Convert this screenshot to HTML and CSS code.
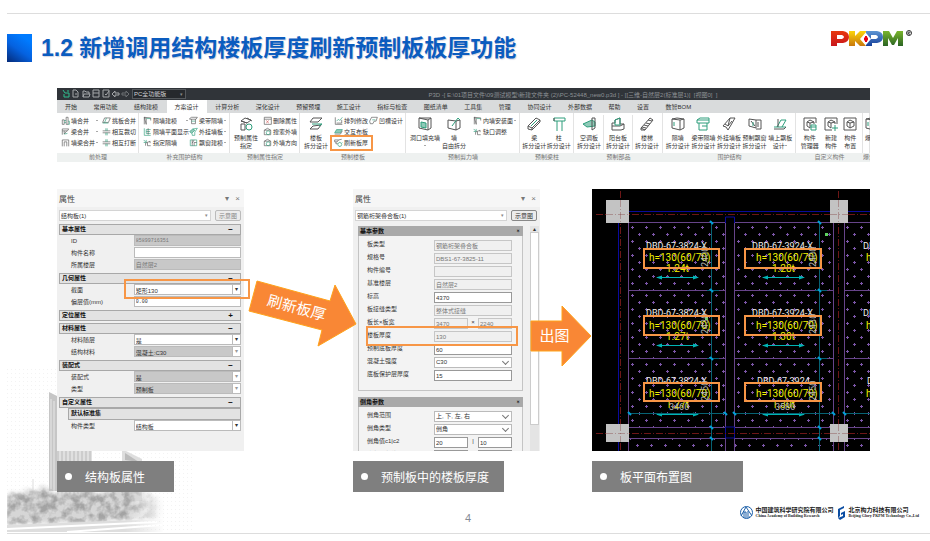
FILE: index.html
```html
<!DOCTYPE html>
<html lang="zh-CN">
<head>
  <meta charset="UTF-8">
  <meta name="viewport" content="width=device-width, initial-scale=1.0">
  <title>1.2 新增调用结构楼板厚度刷新预制板板厚功能</title>
  <link rel="stylesheet" href="styles.css">
</head>
<body>
  <!-- Icon set -->
  <svg class="icon-defs" aria-hidden="true">
    <symbol id="i-bars" viewBox="0 0 14 14"><path class="k" d="M2 13V6h3v7zM8 13V2h3v11z"/><path class="g" d="M5 10h3M5 7h3M11 8h2v5h-2"/></symbol>
    <symbol id="i-beam" viewBox="0 0 14 14"><path class="k" d="M2 3h10l-2 3H2zM2 6v6M5 6v5l4-5"/><path class="g" d="M5 11l5-1"/></symbol>
    <symbol id="i-gate" viewBox="0 0 14 14"><path class="k" d="M2 13V3h10v10M5 13V6h4v7"/></symbol>
    <symbol id="i-slab" viewBox="0 0 14 14"><path class="k" d="M4 3h9l-3 7H1z"/><path class="g" d="M7 3L4 10M1 11h9"/></symbol>
    <symbol id="i-cross" viewBox="0 0 14 14"><path class="k" d="M1 6h12M1 9h12"/><path class="g" d="M6 2v4M8 2v4M6 9v4M8 9v4"/></symbol>
    <symbol id="i-wall" viewBox="0 0 14 14"><path class="k" d="M2 13V2l10 1v4M2 2l3 2v9z"/><path class="g" d="M5 4h7"/></symbol>
    <symbol id="i-list" viewBox="0 0 14 14"><path class="g" d="M2 2v11h10M5 4h7M5 7h6M5 10h7M5 4v6"/><path class="k" d="M8 2v10"/></symbol>
    <symbol id="i-assign" viewBox="0 0 14 14"><path class="g" d="M1 3l4 4M5 3v4H1"/><path class="k" d="M4 12V8l7-3v3M7 7v5h5"/></symbol>
    <symbol id="i-part" viewBox="0 0 14 14"><path class="k" d="M1 4l3-2h9l-2 3H1zM4 5v7h6V5"/><path class="g" d="M4 8h6"/></symbol>
    <symbol id="i-hang" viewBox="0 0 14 14"><path class="gf" d="M1 7l5-4 3 2-5 5z"/><path class="g" d="M6 3l7-1-4 6v5H5v-3"/></symbol>
    <symbol id="i-bay" viewBox="0 0 14 14"><path class="g" d="M2 12V3h10v9z"/><path class="k" d="M5 3v9M8 3l-3 5M8 12V7h4"/></symbol>
    <symbol id="i-attr" viewBox="0 0 14 14"><path class="k" d="M2 4l4-3 6 2-4 3zM2 4l6 2M2 7h4v6H2zM8 1l5 3"/><circle class="g" cx="10" cy="10" r="3"/></symbol>
    <symbol id="i-del" viewBox="0 0 14 14"><path class="k" d="M2 13V2h11v11zM2 5h11"/><path class="r" d="M5 7l4 4M9 7l-4 4"/></symbol>
    <symbol id="i-find" viewBox="0 0 14 14"><path class="k" d="M2 5l5-3 5 3v7H2zM2 5h10"/><circle class="g" cx="8" cy="9" r="3"/></symbol>
    <symbol id="i-floor" viewBox="0 0 14 14"><path class="k" d="M4 1h9l-4 4H1zM4 9l8-1-3 4H1z"/><path class="g" d="M3 7h10l-3 2"/></symbol>
    <symbol id="i-edit" viewBox="0 0 14 14"><path class="k" d="M2 2v11h11M4 11h8V6"/><path class="g" d="M4 8l3-3 2 2 4-5"/></symbol>
    <symbol id="i-lay" viewBox="0 0 14 14"><path class="gf" d="M4 4h9l-3 5H1z"/><path class="k" d="M1 11h9l3-5"/></symbol>
    <symbol id="i-refresh" viewBox="0 0 14 14"><path class="k" d="M1 3h6L5 6H1zM7 3l5-1M3 6v3h3"/><circle class="g" cx="9" cy="10" r="3"/><path class="g" d="M9 6v1M9 13v1M12 8l1-1"/></symbol>
    <symbol id="i-notch" viewBox="0 0 14 14"><path class="k" d="M1 8l3-6h9l-2 6H8l-2 4H2z"/><path class="g" d="M5 6h5"/></symbol>
    <symbol id="i-hole" viewBox="0 0 14 14"><path class="k" d="M1 1l9 2 3-2v10l-3 2-9-2zM10 3v10M1 1h12"/><path class="gf" d="M3 5l5 1v5l-5-1z"/></symbol>
    <symbol id="i-free" viewBox="0 0 14 14"><path class="k" d="M1 3l8 1v9l-8-2zM9 4l4-1v8l-4 2"/><path class="g" d="M5 9l6-8 2 2"/></symbol>
    <symbol id="i-girder" viewBox="0 0 14 14"><path class="k" d="M1 9l8-8 4 2-8 8zM1 9v3l4 1v-2M5 13l8-8V3"/><path class="g" d="M4 9l6-6"/></symbol>
    <symbol id="i-column" viewBox="0 0 14 14"><path class="g" d="M2 1h11v3H2zM5 4v10M10 4v10"/><path class="k" d="M2 1v3"/></symbol>
    <symbol id="i-ac" viewBox="0 0 14 14"><path class="gf" d="M1 7l9-4 3 2v4L5 10z"/><path class="k" d="M10 1v12l3-2V1z"/></symbol>
    <symbol id="i-balcony" viewBox="0 0 14 14"><path class="k" d="M1 6h3V3l5-2v6h4v5l-3 1H1zM1 9h8l4-2"/><path class="g" d="M4 6V3l5-2v7H4z"/></symbol>
    <symbol id="i-stair" viewBox="0 0 14 14"><path class="k" d="M1 11l9-10 3 2-8 10zM2 10l4 1M4 8l4 1M6 6l4 1M8 3l4 1M1 11v2h4"/></symbol>
    <symbol id="i-box" viewBox="0 0 14 14"><path class="k" d="M1 2l8 1v10l-8-2zM9 3l4-1v9l-4 2M1 2l5-1 7 1"/><path class="g" d="M3 5v4"/></symbol>
    <symbol id="i-band" viewBox="0 0 14 14"><path class="g" d="M1 3h12v3H1zM3 6v7h8V6M1 3l3-2h9v2M6 9h5"/></symbol>
    <symbol id="i-panel" viewBox="0 0 14 14"><path class="k" d="M1 9l7-8h5l-4 7-3 5-2-3zM8 1l-2 8M3 7l3 2 4-5"/></symbol>
    <symbol id="i-window" viewBox="0 0 14 14"><path class="k" d="M1 2l7 1v8l-7-2zM8 3h5v9H8M3 4l4 5M10 5v5"/><path class="g" d="M5 5v4"/></symbol>
    <symbol id="i-plate" viewBox="0 0 14 14"><path class="g" d="M1 10h12M4 10l4-7h5l-4 7"/><path class="k" d="M1 12h10l2-2M5 2v8"/></symbol>
    <symbol id="i-manage" viewBox="0 0 14 14"><path class="k" d="M1 13V1h12v5M1 13h5M4 5l3-2 4 2v2M4 5v4l3 2M4 5l3 1 4-1M7 6v5"/><path class="g" d="M8 8h5v5H8zM8 10h5"/></symbol>
    <symbol id="i-new" viewBox="0 0 14 14"><path class="k" d="M1 13V1h12v6M1 13h7M4 5l3-2 4 2v2M4 5v4l3 2M4 5l3 1 4-1M7 6v5"/><path class="g" d="M11 8v6M8 11h6"/></symbol>
    <symbol id="i-place" viewBox="0 0 14 14"><path class="k" d="M1 1h12v12H1zM4 5l3-2 4 2v4l-4 2-3-2zM4 5l3 1 4-1M7 6v5"/></symbol>
  </svg>

  <!-- City backdrop -->
  <svg class="city" viewBox="0 0 188 164" aria-hidden="true">
    <defs>
      <pattern id="dots" width="4" height="4" patternUnits="userSpaceOnUse"><rect width="1" height="1" fill="#f3f3f3"/></pattern>
      <pattern id="floors" width="4" height="3" patternUnits="userSpaceOnUse"><rect width="4" height="3" fill="#cdcdcd"/><path d="M1 0v3" stroke="#f4f4f4"/></pattern>
      <linearGradient id="fade"><stop offset="0" stop-color="#fff"/><stop offset=".75" stop-color="#fff"/><stop offset="1" stop-color="#000"/></linearGradient>
      <mask id="fadeRight"><rect width="158" height="164" fill="url(#fade)"/></mask>
      <filter id="leaves" x="-5%" y="-20%" width="110%" height="140%" color-interpolation-filters="sRGB">
        <feTurbulence type="fractalNoise" baseFrequency=".12" numOctaves="3" seed="4" result="n"/>
        <feColorMatrix in="n" type="matrix" values="0 0 0 0 .64  0 0 0 0 .64  0 0 0 0 .64  3 0 0 0 -1.1" result="t"/>
        <feGaussianBlur in="SourceGraphic" stdDeviation="2" result="s"/>
        <feComposite in="t" in2="s" operator="in" result="tex"/>
        <feMerge><feMergeNode in="s"/><feMergeNode in="tex"/></feMerge>
      </filter>
    </defs>
    <rect width="188" height="164" fill="url(#dots)"/>
    <path d="M42 23l8 4v95h-8z" fill="#c6c6c6"/>
    <path d="M44 30v90M47 32v90" stroke="#e8e8e8"/>
    <path d="M50 80h35v55H50z" fill="url(#floors)"/>
    <path d="M115 80l20 10v42h-20z" fill="#dedede"/>
    <path d="M118 84l14 9-14-2z" fill="#bcbcbc"/>
    <path d="M26 110v24M24 122h4v12h-4z" stroke="#ddd" fill="#e4e4e4"/>
    <g mask="url(#fadeRight)">
      <path d="M0 128l6-5 8 3 6-6 8 4 8-7 10 8 14-2 8 3 12-5 14 5 16-8 10 4 14-3 8 6 16 6v18l-80 4L0 155z" fill="#d6d6d6" filter="url(#leaves)"/>
      <path d="M0 156l156-6v13H0z" fill="#dedede"/>
      <path d="M0 160l150-7M60 163l95-7" stroke="#fff" stroke-width="2"/>
    </g>
  </svg>

  <header class="slide-header">
    <span class="title-mark"></span>
    <h1>1.2 新增调用结构楼板厚度刷新预制板板厚功能</h1>
    <svg class="pkpm" viewBox="0 0 82 18" role="img" aria-label="PKPM">
      <defs>
        <linearGradient id="lr" x2="0" y2="1"><stop stop-color="#e8380d"/><stop offset="1" stop-color="#c8161d"/></linearGradient>
        <linearGradient id="ly" x2="0" y2="1"><stop stop-color="#fbd40b"/><stop offset="1" stop-color="#c9780c"/></linearGradient>
        <linearGradient id="lb" x2="0" y2="1"><stop stop-color="#5d95d3"/><stop offset="1" stop-color="#153f9a"/></linearGradient>
        <linearGradient id="lg" x2="0" y2="1"><stop stop-color="#7ab52c"/><stop offset="1" stop-color="#2b6424"/></linearGradient>
      </defs>
      <path fill="url(#lr)" fill-rule="evenodd" d="M0 1h12q6 1 6 6t-6 6H6v3H0zM6 5v4h5q2-1 2-2t-2-2z"/>
      <path fill="url(#ly)" d="M18 1h6v5l5-5h7l-7 8 6 7h-6l-5-5v5h-6z"/>
      <path fill="url(#lb)" fill-rule="evenodd" d="M35 1h11q6 1 6 6t-6 6h-5v3h-6zM40 5v4h5q2-1 2-2t-2-2z"/>
      <path fill="#fff" d="M35 3l5 6-5 6-5-6z"/>
      <path fill="#e60012" d="M34 6h2v1l1 1v2l-1 1v1h-2v-1l-1-1V8l1-1z"/>
      <path fill="url(#lg)" d="M52 1h6l4 7 4-7h6v15h-5V8l-4 7h-2l-4-7v8h-5z"/>
      <circle cx="78" cy="3" r="2.500" fill="none" stroke="#333"/>
      <path d="M77 5V2h2v1h-2l2 2" fill="none" stroke="#333" stroke-width=".7"/>
    </svg>
  </header>

  <main>
    <!-- Application ribbon -->
    <section class="ribbon">
      <div class="title-bar">
        <svg class="quick" viewBox="0 0 68 10" aria-hidden="true">
          <path class="green" d="M1 1l2 3M3 4h4v4H2V5M6 1v2"/>
          <path d="M11 1h3l2 2v5h-5zM13 5h2M21 8V2h2l1 1h3v2M21 8l1-3h6l-1 3zM31 1h6v7h-6zM31 4h6M41 1h6v7h-6zM43 5l1 1 3-4M50 5l3-3v2h4v2h-4v2z"/>
          <path class="dim-icon" d="M67 5l-3-3v2h-4v2h4v2z"/>
        </svg>
        <span class="pick dark"><select aria-label="工作空间"><option>PC全功能版</option></select></span>
        <span class="doc-title">P3D -[ E:\01项目文件\09测试模型\新建文件夹 (2)\PC-52448_new0.p3d ] - [[三维-自然层2(标准层1)]&nbsp; [视图0]&nbsp; ]</span>
      </div>
      <nav class="tabs">
        <button>开始</button><button>常用功能</button><button>结构建模</button><button class="active">方案设计</button><button>计算分析</button><button>深化设计</button><button>预留预埋</button><button>施工设计</button><button>指标与检查</button><button>图纸清单</button><button>工具集</button><button>管理</button><button>协同设计</button><button>外部数据</button><button>帮助</button><button>设置</button><button>数智BOM</button>
      </nav>
      <div class="groups">
        <div class="group">
          <div class="tools">
            <div class="stack">
              <button><svg><use href="#i-bars"/></svg>墙合并<i class="more"></i></button>
              <button><svg><use href="#i-beam"/></svg>梁合并<i class="more"></i></button>
              <button><svg><use href="#i-gate"/></svg>墙梁合并<i class="more"></i></button>
            </div>
            <div class="stack">
              <button><svg><use href="#i-slab"/></svg>挑板合并</button>
              <button><svg><use href="#i-cross"/></svg>相互裁切</button>
              <button><svg><use href="#i-cross"/></svg>相互打断</button>
            </div>
          </div>
          <div class="group-name">前处理</div>
        </div>
        <div class="group">
          <div class="tools">
            <div class="stack">
              <button><svg><use href="#i-wall"/></svg>隔墙建模<i class="more"></i></button>
              <button><svg><use href="#i-list"/></svg>隔墙平面显示</button>
              <button><svg><use href="#i-assign"/></svg>指定隔墙</button>
            </div>
            <div class="stack">
              <button><svg><use href="#i-part"/></svg>梁带隔墙<i class="more"></i></button>
              <button><svg><use href="#i-hang"/></svg>外挂墙板<i class="more"></i></button>
              <button><svg><use href="#i-bay"/></svg>飘窗建模<i class="more"></i></button>
            </div>
          </div>
          <div class="group-name">补充围护结构</div>
        </div>
        <div class="group">
          <div class="tools">
            <button class="big"><svg><use href="#i-attr"/></svg>预制属性<br>指定</button>
            <div class="stack">
              <button><svg><use href="#i-del"/></svg>删除属性</button>
              <button><svg><use href="#i-find"/></svg>搜索外墙</button>
              <button><svg><use href="#i-find"/></svg>外墙方向</button>
            </div>
          </div>
          <div class="group-name">预制属性指定</div>
        </div>
        <div class="group">
          <div class="tools">
            <button class="big"><svg><use href="#i-floor"/></svg>楼板<br>拆分设计</button>
            <div class="stack">
              <button><svg><use href="#i-edit"/></svg>排列修改</button>
              <button><svg><use href="#i-lay"/></svg>交互布板</button>
              <button class="marked"><svg><use href="#i-refresh"/></svg>刷新板厚</button>
            </div>
            <div class="stack">
              <button><svg><use href="#i-notch"/></svg>凹槽设计</button>
            </div>
          </div>
          <div class="group-name">预制楼板</div>
        </div>
        <div class="group">
          <div class="tools">
            <button class="big"><svg><use href="#i-hole"/></svg>洞口填充墙<br><i class="more"></i></button>
            <button class="big"><svg><use href="#i-free"/></svg>墙<br>自由拆分</button>
            <div class="stack">
              <button><svg><use href="#i-wall"/></svg>内墙安装面<i class="more"></i></button>
              <button><svg><use href="#i-assign"/></svg>缺口调整</button>
            </div>
          </div>
          <div class="group-name">预制剪力墙</div>
        </div>
        <div class="group">
          <div class="tools">
            <button class="big"><svg><use href="#i-girder"/></svg>梁<br>拆分设计</button>
            <button class="big"><svg><use href="#i-column"/></svg>柱<br>拆分设计</button>
          </div>
          <div class="group-name">预制梁柱</div>
        </div>
        <div class="group">
          <div class="tools split">
            <button class="big"><svg><use href="#i-ac"/></svg>空调板<br>拆分设计</button>
            <button class="big"><svg><use href="#i-balcony"/></svg>阳台板<br>拆分设计</button>
            <button class="big"><svg><use href="#i-stair"/></svg>楼梯<br>拆分设计</button>
          </div>
          <div class="group-name">预制部品</div>
        </div>
        <div class="group">
          <div class="tools">
            <button class="big"><svg><use href="#i-box"/></svg>隔墙<br>拆分设计</button>
            <button class="big"><svg><use href="#i-band"/></svg>梁带隔墙<br>拆分设计</button>
            <button class="big"><svg><use href="#i-panel"/></svg>外挂墙板<br>拆分设计</button>
            <button class="big"><svg><use href="#i-window"/></svg>预制飘窗<br>拆分设计</button>
            <button class="big"><svg><use href="#i-plate"/></svg>墙上飘板<br>设计<i class="more"></i></button>
          </div>
          <div class="group-name">围护结构</div>
        </div>
        <div class="group">
          <div class="tools">
            <button class="big"><svg><use href="#i-manage"/></svg>构件<br>管理器</button>
            <button class="big"><svg><use href="#i-new"/></svg>新建<br>构件</button>
            <button class="big"><svg><use href="#i-place"/></svg>构件<br>布置</button>
          </div>
          <div class="group-name">自定义构件</div>
        </div>
        <div class="group cut">
          <div class="tools"><button class="big"><svg><use href="#i-box"/></svg>爆炸</button></div>
          <div class="group-name">爆炸</div>
        </div>
      </div>
    </section>

    <div class="columns panels">
      <!-- Structural slab properties -->
      <section class="panel">
        <div class="panel-head"><h2>属性</h2><span>▾</span><span>×</span></div>
        <div class="object-row">
          <span class="pick plain"><select aria-label="当前构件"><option>结构板(1)</option></select></span>
          <button class="sketch" disabled>示意图</button>
        </div>
        <div class="grid-list">
          <h3>基本属性<b>−</b></h3>
          <div class="prop"><label for="p-id">ID</label><input class="num" id="p-id" value="85899716351" disabled></div>
          <div class="prop"><label for="p-name">构件名称</label><input id="p-name"></div>
          <div class="prop"><label for="p-floor">所属楼层</label><input id="p-floor" value="自然层2" disabled></div>
          <h3>几何属性<b>−</b></h3>
          <div class="prop marked"><label for="p-sec">截面</label><span class="pick"><select id="p-sec"><option>矩形130</option></select></span></div>
          <div class="prop"><label for="p-off">偏层值(mm)</label><input class="num" id="p-off" value="0.00"></div>
          <h3>定位属性<b>+</b></h3>
          <h3>材料属性<b>−</b></h3>
          <div class="prop"><label for="p-mat">材料随层</label><span class="pick"><select id="p-mat"><option>是</option></select></span></div>
          <div class="prop"><label for="p-con">结构材料</label><span class="pick off"><select id="p-con" disabled><option>混凝土:C30</option></select></span></div>
          <h3>装配式<b>−</b></h3>
          <div class="prop"><label for="p-pre">装配式</label><span class="pick off"><select id="p-pre" disabled><option>是</option></select></span></div>
          <div class="prop"><label for="p-type">类型</label><span class="pick off"><select id="p-type" disabled><option>预制板</option></select></span></div>
          <h3>自定义属性<b>−</b></h3>
          <h4>默认标准集</h4>
          <div class="prop"><label for="p-kind">构件类型</label><span class="pick"><select id="p-kind"><option>结构板</option></select></span></div>
        </div>
      </section>

      <div class="arrow arrow-refresh">
        <svg viewBox="0 0 109 68" aria-hidden="true"><path d="M9 1l73 20 5-16 21 39-38 22 4-16L1 31z"/></svg>
        <span>刷新板厚</span>
      </div>

      <!-- Precast slab parameters -->
      <section class="panel">
        <div class="panel-head"><h2>属性</h2><span>▾</span><span>×</span></div>
        <div class="object-row">
          <span class="pick plain"><select aria-label="当前预制构件"><option>钢筋桁架叠合板(1)</option></select></span>
          <button class="sketch">示意图</button>
        </div>
        <div class="scroll-area">
          <div class="cards">
            <div class="card">
              <h3>基本参数<b>»</b></h3>
              <div class="field"><label for="f-type">板类型</label><input id="f-type" value="钢筋桁架叠合板" disabled></div>
              <div class="field"><label for="f-spec">规格号</label><input id="f-spec" value="DBS1-67-3825-11" disabled></div>
              <div class="field"><label for="f-no">构件编号</label><input id="f-no" disabled></div>
              <div class="field"><label for="f-base">基准楼层</label><input id="f-base" value="自然层2" disabled></div>
              <div class="field"><label for="f-lev">标高</label><input id="f-lev" value="4370"></div>
              <div class="field"><label for="f-joint">板接缝类型</label><input id="f-joint" value="整体式接缝" disabled></div>
              <div class="field"><label for="f-len">板长×板宽</label><span class="pair"><input id="f-len" value="3470" disabled><i>×</i><input aria-label="板宽" value="2240" disabled></span></div>
              <div class="field marked"><label for="f-thick">楼板厚度</label><input id="f-thick" value="130" disabled></div>
              <div class="field"><label for="f-bot">预制底板厚度</label><input id="f-bot" value="60"></div>
              <div class="field"><label for="f-grade">混凝土强度</label><span class="pick thin"><select id="f-grade"><option>C30</option></select></span></div>
              <div class="field"><label for="f-cover">底板保护层厚度</label><input id="f-cover" value="15"></div>
            </div>
            <div class="card">
              <h3>倒角参数<b>»</b></h3>
              <div class="field"><label for="f-range">倒角范围</label><span class="pick thin"><select id="f-range"><option>上, 下, 左, 右</option></select></span></div>
              <div class="field"><label for="f-cham">倒角类型</label><span class="pick thin"><select id="f-cham"><option>倒角</option></select></span></div>
              <div class="field"><label for="f-c1">倒角值c1|c2</label><span class="pair"><input id="f-c1" value="20"><i>|</i><input aria-label="c2" value="10"></span></div>
              <div class="field"><label for="f-d1">底角倒角值c1|c2</label><span class="pair"><input id="f-d1"><i>|</i><input aria-label="底角c2"></span></div>
            </div>
          </div>
          <div class="scrollbar"><span>▴</span><div class="thumb"></div></div>
        </div>
      </section>

      <div class="arrow arrow-draw">
        <svg viewBox="0 0 62 62" aria-hidden="true"><path d="M1 16h31V1l29 30-29 30V46H1z"/></svg>
        <span>出图</span>
      </div>

      <!-- Slab layout drawing -->
      <svg class="cad" viewBox="0 0 278 262" preserveAspectRatio="xMinYMin slice" role="img" aria-label="板平面布置图">
        <defs>
          <pattern id="plus" x="1" y="2" width="14" height="14" patternUnits="userSpaceOnUse">
            <path d="M1 2.500h3M2.500 1v3M8 9.500h3M9.500 8v3" stroke="#7c56a8" fill="none"/>
          </pattern>
          <g id="bay">
            <rect width="97" height="68" fill="url(#plus)"/>
            <path d="M28 54.500h41" stroke="#00b4b4"/>
            <path d="M27 54.500l6-2v4zM70 54.500l-6-2v4z" fill="#00b4b4"/>
          </g>
        </defs>
        <rect width="278" height="262" fill="#000"/>
        <use href="#bay" x="37" y="34"/><use href="#bay" x="143" y="34"/><use href="#bay" x="252" y="34"/>
        <use href="#bay" x="37" y="102"/><use href="#bay" x="143" y="102"/><use href="#bay" x="252" y="102"/>
        <use href="#bay" x="37" y="171"/><use href="#bay" x="143" y="171"/><use href="#bay" x="252" y="171"/>
        <g fill="url(#plus)"><rect x="37" y="250" width="97" height="12"/><rect x="143" y="250" width="99" height="12"/><rect x="252" y="250" width="26" height="12"/></g>
        <path class="edge" d="M36.500 34v228M133.500 34v228M142.500 34v228M241.500 34v201M241.500 253v9M252.500 34v228M37 33.500h97M142 33.500h100M252 33.500h26M37 101.500h97M142 101.500h100M252 101.500h26M37 169.500h97M142 169.500h100M252 169.500h26M37 238.500h97M142 238.500h100M252 238.500h26M37 249.500h97M142 249.500h100M252 249.500h26"/>
        <path class="blue" d="M37 22.500h201M256 22.500h22M26.500 34v201M26.500 253v9M133.500 34v-6h9v6M133.500 238v11h9v-11z"/>
        <path class="axis" d="M4 25.500h274M4 244.500h274M28.500 2v260M246.500 2v260"/>
        <path class="dim" d="M119.500 34v228M227.500 34v228M36 224.500h97M142 224.500h100M252 224.500h26M115 101.500h12M223 101.500h12M115 169.500h12M223 169.500h12"/>
        <path class="tick" d="M118 32l3 3M226 32l3 3M118 100l3 3M226 100l3 3M118 168l3 3M226 168l3 3M118 237l3 3M226 237l3 3M36 223l3 3M132 223l3 3M141 223l3 3M240 223l3 3M251 223l3 3M118 248l3 3M226 248l3 3"/>
        <g fill="#c3c3c3"><rect x="14" y="11" width="23" height="23"/><rect x="238" y="11" width="18" height="23"/><rect x="14" y="235" width="23" height="18"/><rect x="238" y="235" width="18" height="18"/></g>
        <path d="M233 44h3v3h-3zM113 128h3v3h-3z" fill="#5fd35f"/>
        <path class="axis" d="M14 25.500h23M28.500 11v23M238 25.500h18M246.500 11v23M14 244.500h23M28.500 235v18M238 244.500h18M246.500 235v18" opacity=".3"/>
        <g class="code">
          <text x="54" y="60">DBD-67-3824-X</text><text x="160" y="60">DBD-67-3924-X</text><text x="271" y="60">DBD-67</text>
          <text x="54" y="127">DBD-67-3824-X</text><text x="160" y="127">DBD-67-3924-X</text><text x="271" y="127">DBD-67</text>
          <text x="54" y="195">DBD-67-3824-X</text><text x="165" y="195">DBD-67-3924</text><text x="275" y="195">DBD</text>
        </g>
        <g class="thick">
          <text x="57" y="72">h=130(60/70)</text><text x="164" y="72">h=130(60/70)</text><text x="274" y="72">h=130</text>
          <text x="57" y="140">h=130(60/70)</text><text x="164" y="140">h=130(60/70)</text><text x="274" y="140">h=130</text>
          <text x="57" y="208">h=130(60/70)</text><text x="164" y="208">h=130(60/70)</text><text x="274" y="208">h=130</text>
          <text x="74" y="83">1.24t</text><text x="180" y="83">1.28t</text>
          <text x="74" y="151">1.27t</text><text x="180" y="151">1.30t</text>
          <text x="74" y="219">1.27t</text><text x="180" y="219">1.30t</text>
        </g>
        <g class="size">
          <text x="77" y="221">3460</text><text x="183" y="221">3580</text>
          <text transform="translate(116 78) rotate(-90)">2400</text><text transform="translate(224 78) rotate(-90)">2400</text>
          <text transform="translate(116 145) rotate(-90)">2430</text><text transform="translate(224 145) rotate(-90)">2430</text>
          <text transform="translate(116 212) rotate(-90)">2450</text><text transform="translate(224 212) rotate(-90)">2450</text>
        </g>
        <g class="frame">
          <rect x="52" y="60" width="75" height="19"/><rect x="153" y="60" width="76" height="19"/>
          <rect x="52" y="127" width="75" height="19"/><rect x="153" y="127" width="76" height="19"/>
          <rect x="52" y="194" width="75" height="18"/><rect x="153" y="194" width="76" height="18"/>
        </g>
      </svg>
    </div>

    <div class="columns captions">
      <p class="short">结构板属性</p>
      <p>预制板中的楼板厚度</p>
      <p>板平面布置图</p>
    </div>
  </main>

  <footer>
    <span class="page-no">4</span>
    <div class="brands">
      <svg width="13" height="13" viewBox="0 0 13 13" aria-hidden="true"><circle cx="6.500" cy="6.500" r="6" fill="#fff" stroke="#1b5fa8"/><path d="M1 10l5-9 6 9M4 10V6h2v4M8 10V5M3 11h7" fill="none" stroke="#1b5fa8"/></svg>
      <p>中国建筑科学研究院有限公司<small>China Academy of Building Research</small></p>
      <svg width="9" height="14" viewBox="0 0 9 14" aria-hidden="true"><path d="M1 3l6-3v2L3 4v6l-2 2zM4 7l4-2v6l-5 3-2-2 5-2V8L4 9z" fill="#0b4da2"/></svg>
      <p>北京构力科技有限公司<small>Beijing Glory PKPM Technology Co.,Ltd</small></p>
    </div>
  </footer>
</body>
</html>
```
FILE: styles.css
```css
:root {
  --orange: #f79646;
  --arrow: #f98735;
  --blue: #0b5cbf;
  --green: #2f9e7c;
  --ink: #333;
  --panel: #f0f0f0;
}

* {
  box-sizing: border-box;
}

body {
  margin: 0;
  padding: 13px 0 0 7px;
  position: relative;
  background: #fff;
  color: var(--ink);
  font-family: "Liberation Sans", "Noto Sans CJK SC", sans-serif;
  font-size: 6px;
}

h1, h2, h3, h4, p {
  margin: 0;
  font-weight: normal;
}

button, input, select {
  font: inherit;
  color: inherit;
  margin: 0;
  padding: 0;
  border: 0;
  border-radius: 0;
  background: none;
}

select {
  appearance: none;
  width: 100%;
  height: 100%;
}

select:disabled, input:disabled {
  opacity: 1;
}

i {
  font-style: normal;
}

.icon-defs {
  position: absolute;
  width: 0;
  height: 0;
}

.k, .g, .r {
  fill: none;
  stroke: #555;
}

.g { stroke: var(--green); }
.r { stroke: #d05050; }
.gf { fill: #8fcab8; stroke: var(--green); }

.city {
  position: absolute;
  left: 7px;
  bottom: 8px;
  width: 188px;
  z-index: -1;
}

/* Header */
.slide-header {
  display: flex;
  align-items: center;
  border-top: 1px solid #ddd;
  padding: 20px 17px 0 0;
}

.title-mark {
  width: 25px;
  height: 28px;
  margin-right: 9px;
  background: linear-gradient(35deg, #052a78, #0562e0 45%, #007bff 80%);
}

.slide-header h1 {
  font-size: 23px;
  line-height: 28px;
  font-weight: bold;
  color: var(--blue);
  text-shadow: 1px 1px 1px #d4d4e0;
}

.pkpm {
  align-self: flex-start;
  width: 82px;
  height: 18px;
  margin: -4px 0 0 auto;
}

main {
  margin: 26px 60px 0 50px;
}

/* Ribbon */
.title-bar {
  display: flex;
  align-items: center;
  height: 12px;
  padding-left: 5px;
  background: #303439;
  color: #8d9195;
}

.quick {
  width: 68px;
  height: 10px;
  fill: none;
  stroke: #a4a7aa;
}

.quick .green {
  stroke: #2fbf8f;
}

.quick .dim-icon {
  stroke: #6c7074;
}

.doc-title {
  margin-left: 30%;
  white-space: nowrap;
}

.tabs {
  display: flex;
  justify-content: space-between;
  height: 13px;
  padding-right: 21%;
  background: #d9dbdc;
}

.tabs button {
  padding: 0 8px;
  white-space: nowrap;
}

.tabs .active {
  background: #fff;
}

.groups {
  display: grid;
  grid-template-columns: 82fr 91fr 70fr 106fr 114fr 54fr 89fr 133fr 67fr 7fr;
  background: #fff;
}

.group {
  min-width: 0;
}

.tools {
  display: flex;
  justify-content: space-between;
  height: 40px;
  padding: 2px 2px 0 4px;
  border-right: 1px solid #e3e3e3;
}

.group-name {
  height: 9px;
  line-height: 9px;
  text-align: center;
  background: #eef1f0;
  color: #777;
  white-space: nowrap;
}

.stack button {
  display: flex;
  align-items: center;
  gap: 1px;
  width: 100%;
  height: 11px;
  white-space: nowrap;
}

.stack svg {
  width: 9px;
  height: 9px;
  flex: none;
}

.big + .stack {
  margin-left: 5px;
}

.big {
  display: block;
  align-self: flex-start;
  min-width: 0;
  padding-top: 2px;
  line-height: 8px;
  text-align: center;
  white-space: nowrap;
}

.big svg {
  display: block;
  width: 14px;
  height: 14px;
  margin: 0 auto 3px;
}

.more {
  display: inline-block;
  margin: 0 1px 1px auto;
  border: 1px solid transparent;
  border-top-color: #555;
  border-bottom: 0;
  vertical-align: middle;
}

.group:nth-child(n+6) .tools {
  padding: 2px 2px 0;
  justify-content: space-around;
}

.split .big + .big {
  border-left: 1px solid #e3e3e3;
  padding-left: 2px;
}

.cut {
  overflow: hidden;
}

.stack .marked, .prop.marked, .field.marked {
  position: relative;
}

.marked::after {
  content: '';
  position: absolute;
  border: 2px solid var(--orange);
  pointer-events: none;
  z-index: 2;
}

.stack .marked::after {
  inset: -2px -5px -3px -4px;
}

/* Columns */
.columns {
  display: grid;
  grid-template-columns: 187fr 109fr 187fr 52fr 278fr;
}

.panels {
  height: 262px;
  margin-top: 27px;
}

.panel {
  min-width: 0;
  height: 262px;
  padding: 0 3px 0 2px;
  background: var(--panel);
}

.panel-head {
  display: flex;
  align-items: center;
  gap: 6px;
  height: 18px;
  margin: 0 -3px 0 -2px;
  padding: 0 4px 0 2px;
  background: #f6f6f6;
  color: #777;
  font-size: 8px;
}

.panel-head h2 {
  margin-right: auto;
  font-size: 8px;
  color: #444;
}

.object-row {
  display: flex;
  gap: 4px;
  height: 11px;
  margin: 3px 0;
}

.sketch {
  width: 26px;
  border: 1px solid #888;
  border-radius: 2px;
  background: #ececec;
  white-space: nowrap;
}

.sketch:disabled {
  border-color: #bbb;
  color: #888;
}

.pick {
  position: relative;
  display: block;
  flex: 1;
  min-width: 0;
  border: 1px solid #bbb;
  background: #fff;
}

.pick select {
  display: block;
  padding-left: 1px;
}

.pick::after {
  content: '▾';
  position: absolute;
  inset: 0 0 0 auto;
  width: 7px;
  border-left: 1px solid #bbb;
  background: #fff;
  text-align: center;
  line-height: 9px;
  pointer-events: none;
}

.pick.plain::after, .pick.dark::after {
  border: 0;
  background: none;
  color: #888;
  font-size: 5px;
}

.pick.plain {
  border-color: #d4d4d4;
}

.pick.dark {
  flex: 0 0 54px;
  height: 10px;
  margin-left: 2px;
  border-color: #55595d;
  background: #26292d;
  color: #d0d2d4;
}

.pick.off {
  background: #c8c8c8;
}

.pick.off::after {
  color: #999;
}

.pick.thin::after {
  content: '';
  width: 4px;
  height: 4px;
  inset: 1px 3px auto auto;
  border: solid #777;
  border-width: 0 1px 1px 0;
  background: none;
  transform: rotate(45deg);
}

.num {
  font-family: "Liberation Mono", monospace;
  font-size: 5px;
}

/* Property list */
.grid-list h3, .grid-list h4 {
  display: flex;
  justify-content: space-between;
  height: 11px;
  margin-top: 2px;
  padding: 0 7px 0 2px;
  border: 1px solid #a8a8a8;
  background: #e2e2e2;
  color: #111;
  font-size: 6px;
  line-height: 9px;
  font-weight: bold;
}

.grid-list h3:first-child {
  margin-top: 0;
}

.grid-list b {
  font-size: 8px;
}

.grid-list h4 {
  height: 12px;
  margin: 0 0 0 9px;
}

.prop {
  display: grid;
  grid-template-columns: 38% 1fr;
  height: 12px;
  padding-left: 9px;
  line-height: 12px;
}

.prop label {
  padding-left: 3px;
  white-space: nowrap;
}

.prop input {
  min-width: 0;
  width: 100%;
  height: 11px;
  padding-left: 1px;
  border: 1px solid #bbb;
  background: #fff;
}

.prop input:disabled {
  background: #c8c8c8;
  color: #777;
}

.prop .pick {
  height: 11px;
}

.prop.marked::after {
  inset: -5px -9px -3px 65px;
}

/* Parameter cards */
.scroll-area {
  display: flex;
  justify-content: space-between;
  height: 227px;
  padding: 2px 0 0 3px;
  margin-right: -2px;
  overflow: hidden;
}

.cards {
  flex: 1;
  margin-right: 7px;
}

.card {
  height: 165px;
  margin-bottom: 6px;
  border: 1px solid #c4c4c4;
  background: #f3f3f3;
}

.card h3 {
  display: flex;
  justify-content: space-between;
  height: 10px;
  margin: -1px -1px 3px;
  padding: 0 3px 0 2px;
  background: #a9a9a9;
  color: #111;
  font-size: 6px;
  line-height: 10px;
  font-weight: bold;
}

.card h3 b {
  transform: rotate(90deg);
}

.field {
  display: grid;
  grid-template-columns: 67px 1fr;
  height: 13px;
  padding: 1px 10px 0 8px;
  line-height: 9px;
}

.field label {
  white-space: nowrap;
}

.field input {
  min-width: 0;
  width: 100%;
  height: 11px;
  padding-left: 1px;
  border: 1px solid #999;
  background: #fff;
}

.field input:disabled {
  border-color: #c6c6c6;
  background: var(--panel);
  color: #777;
}

.field .pick {
  height: 11px;
}

.pair {
  display: grid;
  grid-template-columns: 1fr 10px 1fr;
  text-align: center;
}

.field.marked::after {
  inset: -4px 4px -3px 7px;
}

.scrollbar {
  width: 9px;
  background: #e4e4e4;
  text-align: center;
  line-height: 6px;
}

.thumb {
  height: 193px;
  border: 1px solid #ccc;
  background: #fff;
}

/* Arrows */
.arrow {
  position: relative;
  z-index: 3;
  display: grid;
  place-items: center;
  align-self: start;
  color: #fff;
}

.arrow > * {
  grid-area: 1 / 1;
}

.arrow svg {
  width: 109px;
  fill: var(--arrow);
  stroke: #ffa31a;
}

.arrow-refresh {
  margin: 91px -4px 0 4px;
}

.arrow-refresh span {
  margin: 0 10px 16px 0;
  font-size: 15px;
  transform: rotate(15deg);
}

.arrow-draw {
  margin: 116px 0 0 -10px;
}

.arrow-draw svg {
  width: 62px;
}

.arrow-draw span {
  margin: 0 13px 3px 0;
  font-size: 15px;
}

/* Drawing */
.cad {
  display: block;
  width: 100%;
  height: 262px;
}

.edge, .blue, .axis, .dim, .tick, .frame {
  fill: none;
}

.edge { stroke: #67448a; }
.blue { stroke: #0a0a9c; }
.axis { stroke: #6d1616; stroke-dasharray: 7 2 1 2; }
.dim { stroke: #076273; }
.tick { stroke: #00a0d8; stroke-width: 2; }
.frame { stroke: var(--orange); stroke-width: 2; }

.code, .thick, .size {
  font-family: Roboto, "Liberation Sans", sans-serif;
  font-size: 9px;
  fill: #eee;
}

.thick { font-size: 10px; fill: #f2f200; }
.size { fill: #b8b8b8; }

/* Captions */
.captions {
  margin-top: 10px;
}

.captions p {
  display: flex;
  align-items: center;
  grid-column: 3;
  width: 151px;
  height: 31px;
  padding-left: 8px;
  background: #7f7f7f;
  color: #fff;
  font-size: 12px;
  white-space: nowrap;
}

.captions p::before {
  content: '';
  width: 7px;
  height: 7px;
  margin-right: 13px;
  border-radius: 50%;
  background: #fff;
}

.captions .short {
  grid-column: 1;
  width: 117px;
}

.captions p:last-child {
  grid-column: 5;
}

/* Footer */
footer {
  display: flex;
  justify-content: space-between;
  align-items: center;
  height: 42px;
  margin-bottom: 7px;
  padding: 0 11px 0 458px;
  border-bottom: 1px solid #ddd;
}

.page-no {
  padding-top: 10px;
  color: #868b95;
  font-size: 11px;
}

.brands {
  display: flex;
  align-items: center;
  gap: 3px;
  color: #222;
}

.brands p {
  line-height: 7px;
  font-weight: bold;
  white-space: nowrap;
}

.brands small {
  display: block;
  font-family: "Liberation Serif", serif;
  font-size: 4px;
  line-height: 4px;
}
```
